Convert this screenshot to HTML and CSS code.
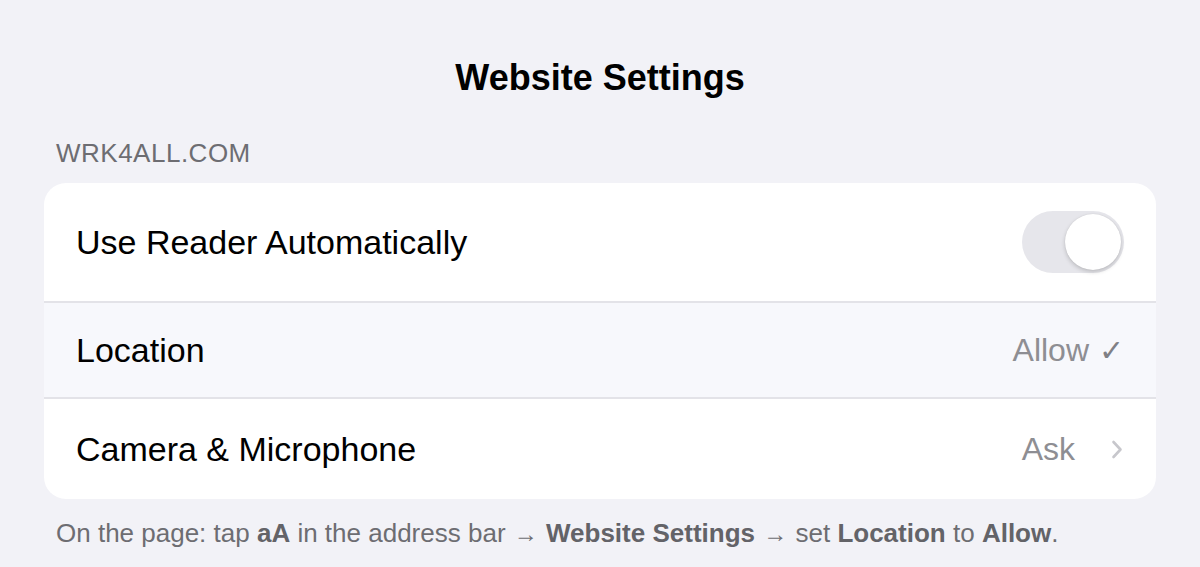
FILE: index.html
```html
<!DOCTYPE html>
<html lang="en">
<head>
<meta charset="utf-8">
<title>Website Settings</title>
<link rel="stylesheet" href="styles.css">
</head>
<body>
<main class="page">
  <h1 class="title">Website Settings</h1>
  <div class="section-header">WRK4ALL.COM</div>
  <div class="card">
    <div class="row row-toggle">
      <span class="label">Use Reader Automatically</span>
      <span class="toggle"><span class="knob"></span></span>
    </div>
    <div class="row row-selected">
      <span class="label">Location</span>
      <span class="value">Allow <span class="check">✓</span></span>
    </div>
    <div class="row row-last">
      <span class="label">Camera &amp; Microphone</span>
      <span class="value">Ask
        <svg class="chevron" width="12" height="19" viewBox="0 0 12 19"><polyline points="2.5,2 9.5,9.5 2.5,17" fill="none" stroke="#c7c7cc" stroke-width="2.6" stroke-linecap="round" stroke-linejoin="round"/></svg>
      </span>
    </div>
  </div>
  <p class="footer">On the page: tap <b>aA</b> in the address bar <span class="arrow">→</span> <b>Website Settings</b> <span class="arrow">→</span> set <b>Location</b> to <b>Allow</b>.</p>
</main>
</body>
</html>
```
FILE: styles.css
```css
html, body {
  margin: 0;
  padding: 0;
  background: #f2f2f7;
  font-family: "Liberation Sans", Arial, sans-serif;
}
.page {
  padding: 56px 44px 0;
}
.title {
  margin: 0;
  text-align: center;
  font-size: 36px;
  line-height: 44px;
  font-weight: bold;
  color: #000;
}
.section-header {
  margin-top: 37px;
  padding-left: 12px;
  font-size: 26px;
  line-height: 32px;
  letter-spacing: 0.5px;
  color: #6d6d72;
}
.card {
  margin-top: 14px;
  background: #fff;
  border-radius: 22px;
  overflow: hidden;
}
.row {
  box-sizing: border-box;
  display: flex;
  align-items: center;
  justify-content: space-between;
  padding: 0 32px;
  border-top: 2px solid #e3e3e8;
}
.row-toggle {
  height: 118px;
  border-top: none;
}
.row-selected {
  height: 96px;
  background: #f7f8fc;
}
.row-last {
  height: 102px;
}
.label {
  font-size: 34px;
  color: #000;
}
.value {
  display: flex;
  align-items: center;
  font-size: 32px;
  color: #8e8e93;
}
.check {
  margin-left: 10px;
  font-size: 30px;
  color: #808085;
}
.chevron {
  margin-left: 36px;
  margin-right: 1px;
}
.toggle {
  position: relative;
  width: 102px;
  height: 62px;
  border-radius: 31px;
  background: #e6e6eb;
}
.knob {
  position: absolute;
  top: 3px;
  right: 3px;
  width: 56px;
  height: 56px;
  border-radius: 50%;
  background: #fff;
  box-shadow: 0 2px 4px rgba(0,0,0,0.18), 0 0 1px rgba(0,0,0,0.12);
}
.footer {
  margin: 18px 0 0;
  padding-left: 12px;
  font-size: 26px;
  line-height: 32px;
  color: #6d6d72;
}
.footer b {
  color: #636368;
}
.arrow {
  font-size: 24px;
  margin: 0 1px;
}
```
